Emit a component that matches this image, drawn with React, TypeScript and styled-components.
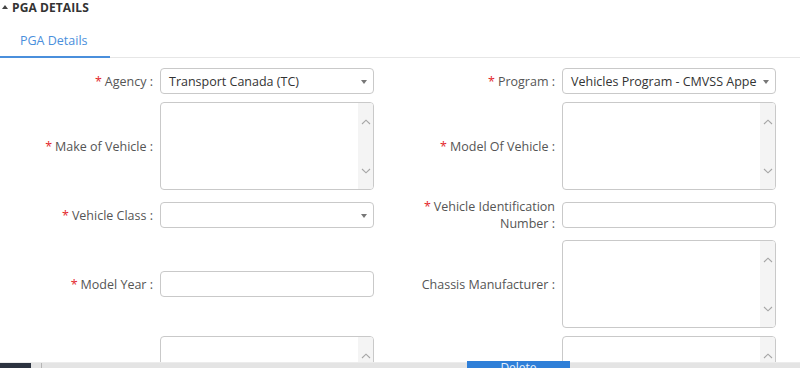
import React from 'react';
import styled, { createGlobalStyle } from 'styled-components';

const GlobalStyle = createGlobalStyle`
    html, body {
        margin: 0;
        padding: 0;
        background: #ffffff;
        overflow: hidden;
        font-family: 'Open Sans', 'Noto Sans', sans-serif;
    }
`;

const Page = styled.div`
    width: 800px;
    height: 368px;
    position: relative;
    overflow: hidden;
`;

const SectionHeader = styled.div`
    display: flex;
    align-items: center;
    height: 15px;
    padding-left: 2px;
    gap: 4px;
    font-size: 12px;
    font-weight: 700;
    color: #333333;
    letter-spacing: 0.1px;
`;

const Caret = styled.span`
    width: 0;
    height: 0;
    margin-top: -2px;
    border-left: 3px solid transparent;
    border-right: 3px solid transparent;
    border-bottom: 4px solid #444444;
`;

const Tabs = styled.div`
    display: flex;
    border-bottom: 1px solid #e6e6e6;
`;

const Tab = styled.div<{ $active?: boolean }>`
    padding: 17px 22px 6px 20px;
    line-height: 18px;
    font-size: 12.5px;
    color: ${(p) => (p.$active ? '#4a8fdc' : '#666666')};
    border-bottom: 2px solid ${(p) => (p.$active ? '#4a8fdc' : 'transparent')};
    margin-bottom: -1px;
`;

const Form = styled.div`
    display: flex;
    flex-direction: column;
    gap: 8px;
    margin-top: 10px;
`;

const Row = styled.div`
    display: flex;
    align-items: center;
    gap: 28px;
`;

const Field = styled.div`
    display: grid;
    grid-template-columns: 153px 214px;
    column-gap: 7px;
    align-items: center;
`;

const Label = styled.label`
    text-align: right;
    font-size: 12.5px;
    line-height: 17px;
    color: #555555;
`;

const Req = styled.span`
    color: #e3262b;
    margin-right: 3px;
`;

const SelectBox = styled.div`
    position: relative;
    height: 26px;
    box-sizing: border-box;
    border: 1px solid #c9c9c9;
    border-radius: 4px;
    padding: 0 22px 0 8px;
    display: flex;
    align-items: center;
    font-size: 12.5px;
    color: #333333;
    white-space: nowrap;
    overflow: hidden;

    &::after {
        content: '';
        position: absolute;
        right: 6px;
        top: 11px;
        border-left: 3.5px solid transparent;
        border-right: 3.5px solid transparent;
        border-top: 4px solid #777777;
    }
`;

const TextInput = styled.div`
    height: 26px;
    box-sizing: border-box;
    border: 1px solid #c9c9c9;
    border-radius: 4px;
`;

const AreaBox = styled.div`
    height: 88px;
    box-sizing: border-box;
    border: 1px solid #c9c9c9;
    border-radius: 4px;
    display: flex;
    overflow: hidden;
`;

const AreaText = styled.div`
    flex: 1;
`;

const ScrollTrack = styled.div`
    width: 15px;
    background: #f4f4f4;
    display: flex;
    flex-direction: column;
    justify-content: space-between;
    align-items: center;
    padding: 16px 0 15px;
    box-sizing: border-box;
`;

const BottomBar = styled.div`
    position: absolute;
    left: 0;
    right: 0;
    top: 362px;
    height: 6px;
    background: #e4e4e4;
    border-top: 1px solid #ececec;
    display: flex;
    align-items: stretch;
`;

const DarkBlock = styled.div`
    width: 31px;
    background: #2c3340;
`;

const Divider = styled.div`
    width: 1px;
    margin-left: 10px;
    background: #b5b5b5;
`;

const DeleteButton = styled.div`
    position: absolute;
    left: 467px;
    top: -2px;
    width: 103px;
    height: 10px;
    background: #2f7fd8;
    color: #eaf2fb;
    font-size: 12px;
    line-height: 14px;
    text-align: center;
    overflow: hidden;
`;

const Chevron = ({ up }: { up?: boolean }) => (
    <svg width="10" height="6" viewBox="0 0 10 6">
        <path
            d={up ? 'M1 5 L5 1.2 L9 5' : 'M1 1 L5 4.8 L9 1'}
            fill="none"
            stroke="#a6a6a6"
            strokeWidth="1.1"
        />
    </svg>
);

const TextArea = () => (
    <AreaBox>
        <AreaText />
        <ScrollTrack>
            <Chevron up />
            <Chevron />
        </ScrollTrack>
    </AreaBox>
);

const FieldLabel = ({ text, required }: { text: string; required?: boolean }) => (
    <Label>
        {required && <Req>*</Req>}
        {text}
    </Label>
);

export default function App() {
    return (
        <Page>
            <GlobalStyle />
            <SectionHeader>
                <Caret />
                PGA DETAILS
            </SectionHeader>
            <Tabs>
                <Tab $active>PGA Details</Tab>
            </Tabs>
            <Form>
                <Row>
                    <Field>
                        <FieldLabel text="Agency :" required />
                        <SelectBox>Transport Canada (TC)</SelectBox>
                    </Field>
                    <Field>
                        <FieldLabel text="Program :" required />
                        <SelectBox>Vehicles Program - CMVSS Appe</SelectBox>
                    </Field>
                </Row>
                <Row>
                    <Field>
                        <FieldLabel text="Make of Vehicle :" required />
                        <TextArea />
                    </Field>
                    <Field>
                        <FieldLabel text="Model Of Vehicle :" required />
                        <TextArea />
                    </Field>
                </Row>
                <Row>
                    <Field>
                        <FieldLabel text="Vehicle Class :" required />
                        <SelectBox />
                    </Field>
                    <Field>
                        <FieldLabel text="Vehicle Identification Number :" required />
                        <TextInput />
                    </Field>
                </Row>
                <Row>
                    <Field>
                        <FieldLabel text="Model Year :" required />
                        <TextInput />
                    </Field>
                    <Field>
                        <FieldLabel text="Chassis Manufacturer :" />
                        <TextArea />
                    </Field>
                </Row>
                <Row>
                    <Field>
                        <Label />
                        <TextArea />
                    </Field>
                    <Field>
                        <Label />
                        <TextArea />
                    </Field>
                </Row>
            </Form>
            <BottomBar>
                <DarkBlock />
                <Divider />
                <DeleteButton>Delete</DeleteButton>
            </BottomBar>
        </Page>
    );
}
